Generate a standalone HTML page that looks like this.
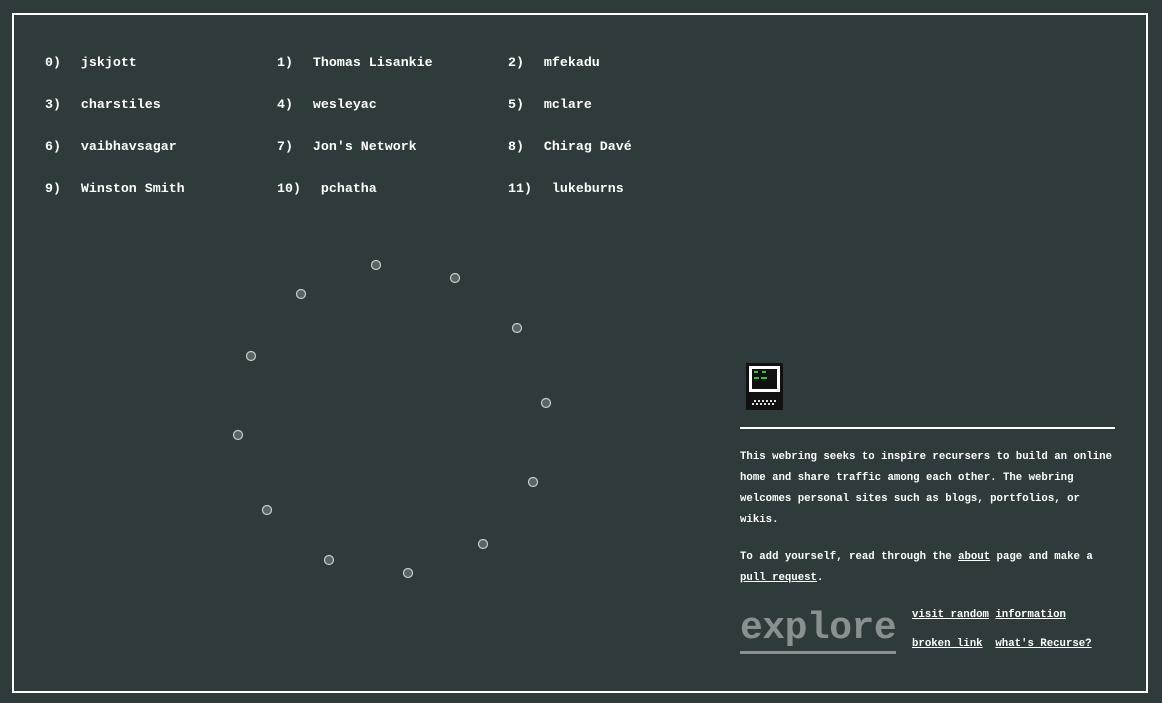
<!DOCTYPE html>
<html><head><style>
html,body{margin:0;padding:0;background:#2e3a3c;width:1162px;height:703px;overflow:hidden}
body{font-family:"Liberation Mono",monospace;font-weight:bold;color:#fff}
.frame{position:absolute;left:12px;top:13px;width:1132px;height:676px;border:2px solid #fff}
.it{position:absolute;font-size:13.3px;white-space:pre;letter-spacing:0}
.it span{margin-left:4px}
.p{position:absolute;font-size:10.7px;white-space:pre;line-height:21px;left:740px}
u{text-decoration:underline}
.ex{position:absolute;left:740px;top:604px;font-size:38px;font-weight:bold;color:#8a9092;letter-spacing:-0.5px;line-height:50px}
.ex:after{content:"";position:absolute;left:0;right:0;bottom:0;height:3px;background:#8a9092}
</style></head><body>
<div class="frame"></div>
<div class="it" style="left:45px;top:55px">0)  <span>jskjott</span></div>
<div class="it" style="left:277px;top:55px">1)  <span>Thomas Lisankie</span></div>
<div class="it" style="left:508px;top:55px">2)  <span>mfekadu</span></div>
<div class="it" style="left:45px;top:97px">3)  <span>charstiles</span></div>
<div class="it" style="left:277px;top:97px">4)  <span>wesleyac</span></div>
<div class="it" style="left:508px;top:97px">5)  <span>mclare</span></div>
<div class="it" style="left:45px;top:139px">6)  <span>vaibhavsagar</span></div>
<div class="it" style="left:277px;top:139px">7)  <span>Jon's Network</span></div>
<div class="it" style="left:508px;top:139px">8)  <span>Chirag Davé</span></div>
<div class="it" style="left:45px;top:181px">9)  <span>Winston Smith</span></div>
<div class="it" style="left:277px;top:181px">10)  <span>pchatha</span></div>
<div class="it" style="left:508px;top:181px">11)  <span>lukeburns</span></div>
<svg width="1162" height="703" style="position:absolute;left:0;top:0">
<g fill="#5a6466" stroke="#c8cccd" stroke-width="1.2">
<circle cx="376" cy="265" r="4.5"/><circle cx="455" cy="278" r="4.5"/><circle cx="517" cy="328" r="4.5"/>
<circle cx="546" cy="403" r="4.5"/><circle cx="533" cy="482" r="4.5"/><circle cx="483" cy="544" r="4.5"/>
<circle cx="408" cy="573" r="4.5"/><circle cx="329" cy="560" r="4.5"/><circle cx="267" cy="510" r="4.5"/>
<circle cx="238" cy="435" r="4.5"/><circle cx="251" cy="356" r="4.5"/><circle cx="301" cy="294" r="4.5"/>
</g>
<rect x="746" y="363" width="37" height="47" fill="#111"/>
<rect x="749" y="366" width="31" height="26" fill="#fff"/>
<rect x="752" y="369" width="25" height="20" fill="#111"/>
<rect x="754" y="371" width="4" height="2" fill="#2c2"/><rect x="762" y="371" width="4" height="2" fill="#2c2"/>
<rect x="754" y="377" width="5" height="2" fill="#2c2"/><rect x="761" y="377" width="6" height="2" fill="#2c2"/>
<g fill="#ddd">
<rect x="754" y="400" width="2" height="2"/><rect x="758" y="400" width="2" height="2"/><rect x="762" y="400" width="2" height="2"/><rect x="766" y="400" width="2" height="2"/><rect x="770" y="400" width="2" height="2"/><rect x="774" y="400" width="2" height="2"/>
<rect x="752" y="403" width="2" height="2"/><rect x="756" y="403" width="2" height="2"/><rect x="760" y="403" width="2" height="2"/><rect x="764" y="403" width="2" height="2"/><rect x="768" y="403" width="2" height="2"/><rect x="772" y="403" width="2" height="2"/>
</g>
<rect x="740" y="427" width="375" height="2" fill="#fff"/>
</svg>
<div class="p" style="top:447px">This webring seeks to inspire recursers to build an online
home and share traffic among each other. The webring
welcomes personal sites such as blogs, portfolios, or
wikis.</div>
<div class="p" style="top:547px">To add yourself, read through the <u>about</u> page and make a
<u>pull request</u>.</div>
<div class="ex">explore</div>
<div class="p" style="left:912px;top:605px"><u>visit random</u> <u>information</u></div>
<div class="p" style="left:912px;top:634px"><u>broken link</u>  <u>what's Recurse?</u></div>
</body></html>
